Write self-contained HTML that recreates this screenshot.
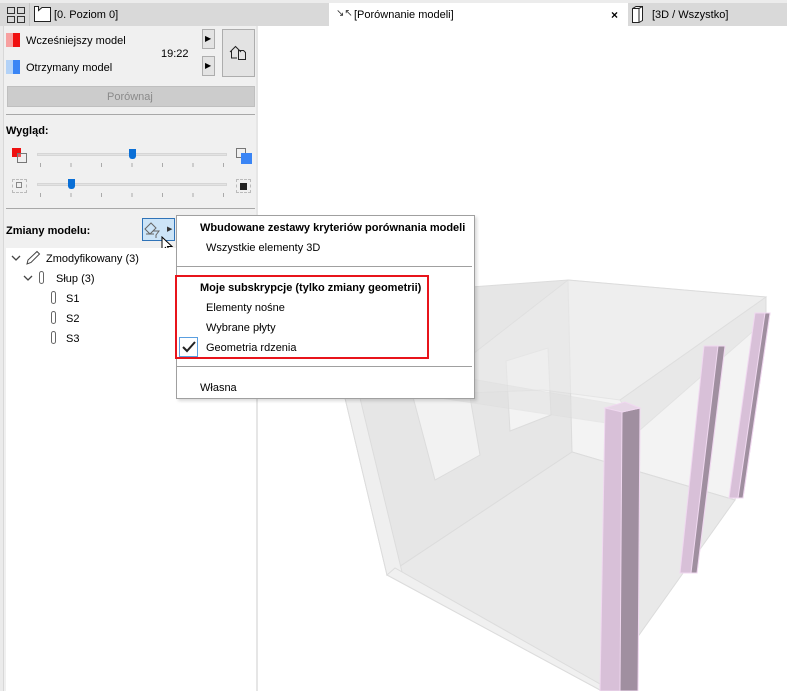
<!DOCTYPE html>
<html><head><meta charset="utf-8"><style>
*{margin:0;padding:0;box-sizing:border-box}
body{width:787px;height:691px;overflow:hidden;background:#fff;font-family:"Liberation Sans",sans-serif;font-size:11px;color:#000;position:relative}
.a{position:absolute}
.t{position:absolute;white-space:nowrap;transform:translateY(1px)}
</style></head><body>
<div class="a" style="left:0;top:0;width:787px;height:3px;background:#ececec"></div>
<div class="a" style="left:0;top:3px;width:787px;height:23px;background:#d9d9d9"></div>
<div class="a" style="left:29px;top:3px;width:1px;height:23px;background:#c4c4c4"></div>
<svg class="a" style="left:7px;top:7px" width="20" height="16"><g fill="none" stroke="#333" stroke-width="1"><rect x="0.5" y="0.5" width="7" height="6"/><rect x="10.5" y="0.5" width="7" height="6"/><rect x="0.5" y="9.5" width="7" height="6"/><rect x="10.5" y="9.5" width="7" height="6"/></g></svg>
<svg class="a" style="left:34px;top:6px" width="18" height="16"><path d="M0.5 15.5V0.5H4.5V4.5L8 1.5H16.5V15.5Z" fill="#fff" stroke="#222"/></svg>
<div class="t" style="left:54px;top:8px">[0. Poziom 0]</div>
<div class="a" style="left:329px;top:3px;width:299px;height:23px;background:#fff"></div>
<div class="t" style="left:336px;top:7px;font-size:10px;color:#333">↘↖</div>
<div class="t" style="left:354px;top:8px">[Porównanie modeli]</div>
<div class="t" style="left:611px;top:7px;font-size:12px;font-weight:bold">×</div>
<svg class="a" style="left:631px;top:6px" width="20" height="17"><path d="M1.5 2.5L5 0.5H11.5V14.5L8 16.5H1.5Z M8 2.5V16.5 M1.5 2.5H8L11.5 0.5" fill="#fff" stroke="#222"/></svg>
<div class="t" style="left:652px;top:8px">[3D / Wszystko]</div>

<div class="a" style="left:0;top:26px;width:258px;height:665px;background:#f0f0f0"></div>
<div class="a" style="left:0;top:26px;width:4px;height:665px;background:#ebebeb;border-right:1px solid #d8d8d8"></div>
<div class="a" style="left:256px;top:26px;width:2px;height:665px;background:#e6e6e6"></div>
<div class="a" style="left:6px;top:33px;width:7px;height:14px;background:#f7a0a0"></div>
<div class="a" style="left:13px;top:33px;width:7px;height:14px;background:#f01010"></div>
<div class="t" style="left:26px;top:34px">Wcześniejszy model</div>
<div class="t" style="left:161px;top:47px">19:22</div>
<div class="a" style="left:6px;top:60px;width:7px;height:14px;background:#b3d2f7"></div>
<div class="a" style="left:13px;top:60px;width:7px;height:14px;background:#3a85f5"></div>
<div class="t" style="left:26px;top:61px">Otrzymany model</div>
<div class="a" style="left:202px;top:29px;width:13px;height:20px;background:#e3e3e3;border:1px solid #adadad"></div>
<div class="t" style="left:205px;top:33px;font-size:8px">▶</div>
<div class="a" style="left:202px;top:56px;width:13px;height:20px;background:#e3e3e3;border:1px solid #adadad"></div>
<div class="t" style="left:205px;top:60px;font-size:8px">▶</div>
<div class="a" style="left:222px;top:29px;width:33px;height:48px;background:#e3e3e3;border:1px solid #adadad"></div>
<svg class="a" style="left:229px;top:43px" width="20" height="18"><path d="M1 9L6.5 3.5L12 9 M2.5 8V15H8 M9.5 7.5H14.5L16.5 9.5V16.5H9.5Z" fill="none" stroke="#222"/></svg>
<div class="a" style="left:7px;top:86px;width:248px;height:21px;background:#cccccc;border:1px solid #bfbfbf"></div>
<div class="t" style="left:107px;top:90px;color:#8a8a8a">Porównaj</div>
<div class="a" style="left:6px;top:114px;width:249px;height:1px;background:#a8a8a8"></div>
<div class="t" style="left:6px;top:124px;font-weight:bold">Wygląd:</div>
<div class="a" style="left:12px;top:148px;width:9px;height:9px;background:#ee1111"></div>
<div class="a" style="left:17px;top:153px;width:10px;height:10px;border:1px solid #777;background:rgba(240,240,240,.3)"></div>
<div class="a" style="left:37px;top:153px;width:190px;height:3px;background:#e3e3e3;border:1px solid #d6d6d6"></div>
<div class="a" style="left:129px;top:149px;width:7px;height:10px;background:#0a6fd6;border-radius:0 0 3px 3px"></div>
<div class="a" style="left:40px;top:163px;width:190px;height:4px;background:repeating-linear-gradient(90deg,#aaa 0 1px,transparent 1px 30.5px)"></div>
<div class="a" style="left:236px;top:148px;width:10px;height:10px;border:1px solid #777"></div>
<div class="a" style="left:241px;top:153px;width:11px;height:11px;background:#3a85f5"></div>
<div class="a" style="left:12px;top:179px;width:15px;height:14px;border:1px dashed #bbb"></div>
<div class="a" style="left:16px;top:182px;width:6px;height:6px;border:1px solid #888"></div>
<div class="a" style="left:37px;top:183px;width:190px;height:3px;background:#e3e3e3;border:1px solid #d6d6d6"></div>
<div class="a" style="left:68px;top:179px;width:7px;height:10px;background:#0a6fd6;border-radius:0 0 3px 3px"></div>
<div class="a" style="left:40px;top:193px;width:190px;height:4px;background:repeating-linear-gradient(90deg,#aaa 0 1px,transparent 1px 30.5px)"></div>
<div class="a" style="left:236px;top:179px;width:15px;height:14px;border:1px dashed #bbb"></div>
<div class="a" style="left:240px;top:183px;width:7px;height:7px;background:#222"></div>
<div class="a" style="left:6px;top:208px;width:249px;height:1px;background:#a8a8a8"></div>
<div class="t" style="left:6px;top:224px;font-weight:bold">Zmiany modelu:</div>
<div class="a" style="left:142px;top:218px;width:33px;height:23px;background:#cce4f7;border:1px solid #2f73b8"></div>
<svg class="a" style="left:144px;top:220px" width="24" height="20"><path d="M1 9L7 3L12 8L6 14Z M2 14H10 M9 11H15L12 15V18" fill="none" stroke="#666"/></svg>
<div class="t" style="left:167px;top:224px;font-size:7px;color:#333">▶</div>
<svg class="a" style="left:161px;top:236px" width="14" height="20"><path d="M1 1V15L4.5 11.5L7 17L9 16L6.5 10.5H11Z" fill="#fff" stroke="#000"/></svg>
<div class="a" style="left:6px;top:248px;width:250px;height:443px;background:#fff"></div>
<svg class="a" style="left:11px;top:254px" width="10" height="8"><path d="M1 2L5 6L9 2" fill="none" stroke="#444" stroke-width="1.3"/></svg>
<svg class="a" style="left:25px;top:250px" width="16" height="16"><path d="M2 14L3 10L12 1.5L14.5 4L6 12.5Z" fill="none" stroke="#444"/></svg>
<div class="t" style="left:46px;top:252px">Zmodyfikowany (3)</div>
<svg class="a" style="left:23px;top:274px" width="10" height="8"><path d="M1 2L5 6L9 2" fill="none" stroke="#444" stroke-width="1.3"/></svg>
<svg class="a" style="left:38px;top:270px" width="8" height="15"><rect x="1.5" y="1.5" width="4" height="12" rx="2" fill="none" stroke="#666"/></svg>
<div class="t" style="left:56px;top:272px">Słup (3)</div>
<svg class="a" style="left:50px;top:290px" width="8" height="15"><rect x="1.5" y="1.5" width="4" height="12" rx="2" fill="none" stroke="#666"/></svg>
<div class="t" style="left:66px;top:292px">S1</div>
<svg class="a" style="left:50px;top:310px" width="8" height="15"><rect x="1.5" y="1.5" width="4" height="12" rx="2" fill="none" stroke="#666"/></svg>
<div class="t" style="left:66px;top:312px">S2</div>
<svg class="a" style="left:50px;top:330px" width="8" height="15"><rect x="1.5" y="1.5" width="4" height="12" rx="2" fill="none" stroke="#666"/></svg>
<div class="t" style="left:66px;top:332px">S3</div>

<svg class="a" style="left:258px;top:26px" width="529" height="665" viewBox="258 26 529 665">
<g stroke="#dcdcdc" stroke-width="1">
<polygon points="290,300 568,280 572,452 387,575 345,398" fill="#e6e6e6"/>
<polygon points="568,280 766,297 766,320 735,500 572,452" fill="#f3f3f3"/>
<polygon points="572,452 735,500 600,690 387,575" fill="#e9e9e9"/>
<polygon points="345,398 360,398 402,572 387,575" fill="#efefef"/>
<polygon points="387,575 600,690 600,684 395,568" fill="#f0f0f0"/>
<polygon points="506,361 548,348 551,415 510,431" fill="#f3f3f3"/>
<polygon points="413,397 470,397 480,455 435,480" fill="#f2f2f2"/>
<polygon points="568,280 766,297 620,400 543,390 420,395" fill="#ebebeb" opacity="0.6"/>
<polygon points="620,400 766,297 766,320 640,430" fill="#e4e4e4" opacity="0.7"/>
<polygon points="420,370 620,405 620,425 420,395" fill="#e0e0e0" opacity="0.5"/>
</g>
<g stroke="#f0d8f0">
<polygon points="755,313 770,313 743,498 729,498" fill="#d8c0d8"/>
<polygon points="765,313 770,313 743,498 738,498" fill="#a08fa0"/>
<polygon points="704,346 725,346 697,573 680,573" fill="#d8c0d8"/>
<polygon points="718,346 725,346 697,573 691,573" fill="#a08fa0"/>
<polygon points="605,408 640,408 638,691 600,691" fill="#d8c0d8"/>
<polygon points="622,412 640,408 638,691 620,691" fill="#a08fa0"/>
<polygon points="605,408 625,402 640,408 622,412" fill="#e6d6e6"/>
</g>
</svg>

<div class="a" style="left:176px;top:215px;width:299px;height:184px;background:#fff;border:1px solid #a0a0a0;box-shadow:2px 2px 3px rgba(0,0,0,.15)"></div>
<div class="t" style="left:200px;top:221px;font-weight:bold">Wbudowane zestawy kryteriów porównania modeli</div>
<div class="t" style="left:206px;top:241px">Wszystkie elementy 3D</div>
<div class="a" style="left:177px;top:266px;width:295px;height:1px;background:#a0a0a0"></div>
<div class="a" style="left:175px;top:275px;width:254px;height:84px;border:2px solid #e8141b"></div>
<div class="t" style="left:200px;top:281px;font-weight:bold">Moje subskrypcje (tylko zmiany geometrii)</div>
<div class="t" style="left:206px;top:301px">Elementy nośne</div>
<div class="t" style="left:206px;top:321px">Wybrane płyty</div>
<div class="a" style="left:179px;top:337px;width:19px;height:20px;border:1px solid #5a9fe0"></div>
<svg class="a" style="left:182px;top:340px" width="14" height="14"><path d="M1 7L5 11L13 2" fill="none" stroke="#222" stroke-width="2"/></svg>
<div class="t" style="left:206px;top:341px">Geometria rdzenia</div>
<div class="a" style="left:177px;top:366px;width:295px;height:1px;background:#a0a0a0"></div>
<div class="t" style="left:200px;top:381px">Własna</div>
</body></html>
